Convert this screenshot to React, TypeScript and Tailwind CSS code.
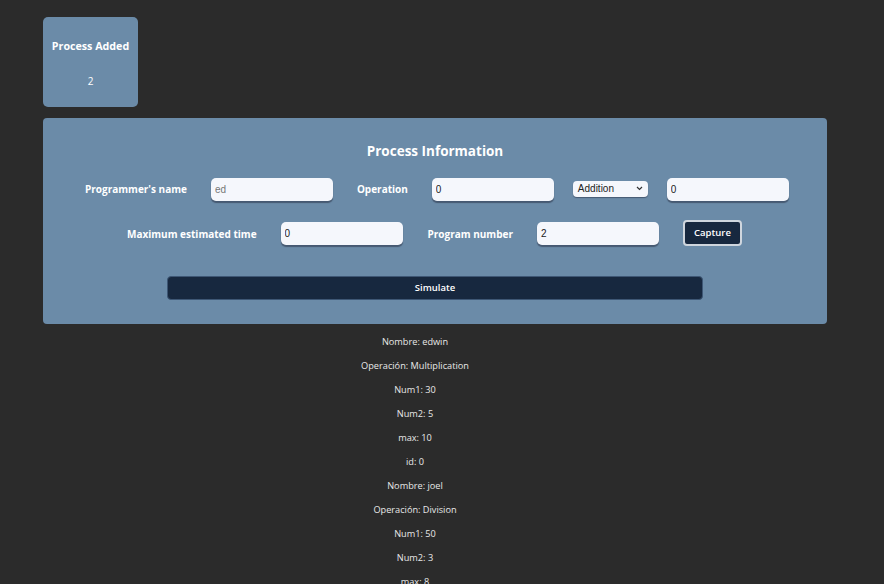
const processes = [
  { name: 'edwin', op: 'Multiplication', n1: 30, n2: 5, max: 10, id: 0 },
  { name: 'joel', op: 'Division', n1: 50, n2: 3, max: 8, id: 1 },
]

const font = { fontFamily: '"Open Sans", "Noto Sans", sans-serif' }
const inputFont = { fontFamily: '"Liberation Sans", Arial, sans-serif' }

function Field({ value, muted }: { value: string; muted?: boolean }) {
  return (
    <input
      readOnly
      value={value}
      className={`w-[122px] h-[23px] rounded-[5px] bg-[#f5f7fc] px-[4px] text-[10px] outline-none shadow-[0_2px_1px_rgba(40,50,70,0.55)] ${muted ? 'text-[#777]' : 'text-[#222]'}`}
      style={inputFont}
    />
  )
}

function Label({ text, className = '' }: { text: string; className?: string }) {
  return <span className={`pt-[4px] text-[10px] font-bold ${className}`}>{text}</span>
}

export default function App() {
  return (
    <div className="min-h-screen bg-[#2b2b2b] pt-[17px] pl-[43px] overflow-hidden" style={font}>
      <div className="w-[95px] h-[90px] rounded-[5px] bg-[#6b8ba8] flex flex-col items-center text-white">
        <p className="mt-[21px] text-[10.7px] font-bold">Process Added</p>
        <p className="mt-[20px] text-[10px]">2</p>
      </div>

      <div className="mt-[11px] w-[784px] h-[206px] rounded-[4px] bg-[#6b8ba8] text-white">
        <h2 className="pt-[23px] text-center text-[13.5px] font-bold leading-[20px]">Process Information</h2>

        <div className="mt-[15px] ml-[42px] flex items-center h-[23px]">
          <Label text="Programmer's name" />
          <div className="ml-[24px]"><Field value="ed" muted /></div>
          <Label text="Operation" className="ml-[24px]" />
          <div className="ml-[24px]"><Field value="0" /></div>
          <div
            className="ml-[19px] mt-[2px] w-[75px] h-[16px] rounded-[4px] bg-[#f5f7fc] flex items-center justify-between px-[5px] text-[10px] text-[#222] shadow-[0_1px_1px_rgba(40,50,70,0.55)]"
            style={inputFont}
          >
            <span>Addition</span>
            <svg width="7" height="5" viewBox="0 0 7 5"><path d="M1 1l2.5 2.5L6 1" stroke="#333" strokeWidth="1.2" fill="none" /></svg>
          </div>
          <div className="ml-[19px]"><Field value="0" /></div>
        </div>

        <div className="mt-[20px] ml-[84px] flex items-center h-[26px]">
          <Label text="Maximum estimated time" />
          <div className="ml-[24px]"><Field value="0" /></div>
          <Label text="Program number" className="ml-[25px]" />
          <div className="ml-[24px]"><Field value="2" /></div>
          <button className="ml-[24px] mt-[2px] w-[59px] h-[26px] rounded-[4px] bg-[#17283f] border-2 border-[#cfd6de] text-[9.5px] font-semibold text-white">Capture</button>
        </div>

        <button className="mt-[31px] ml-[124px] w-[536px] h-[24px] rounded-[4px] bg-[#17283f] border border-[#3e5775] text-[9.5px] font-semibold text-white">Simulate</button>
      </div>

      <div className="-ml-[43px] w-[830px] mt-[6px] text-center text-[9.2px] text-[#e8e8e8]">
        {processes.map(p => (
          <div key={p.id}>
            <p className="leading-[24px]">Nombre: {p.name}</p>
            <p className="leading-[24px]">Operación: {p.op}</p>
            <p className="leading-[24px]">Num1: {p.n1}</p>
            <p className="leading-[24px]">Num2: {p.n2}</p>
            <p className="leading-[24px]">max: {p.max}</p>
            <p className="leading-[24px]">id: {p.id}</p>
          </div>
        ))}
      </div>
    </div>
  )
}
